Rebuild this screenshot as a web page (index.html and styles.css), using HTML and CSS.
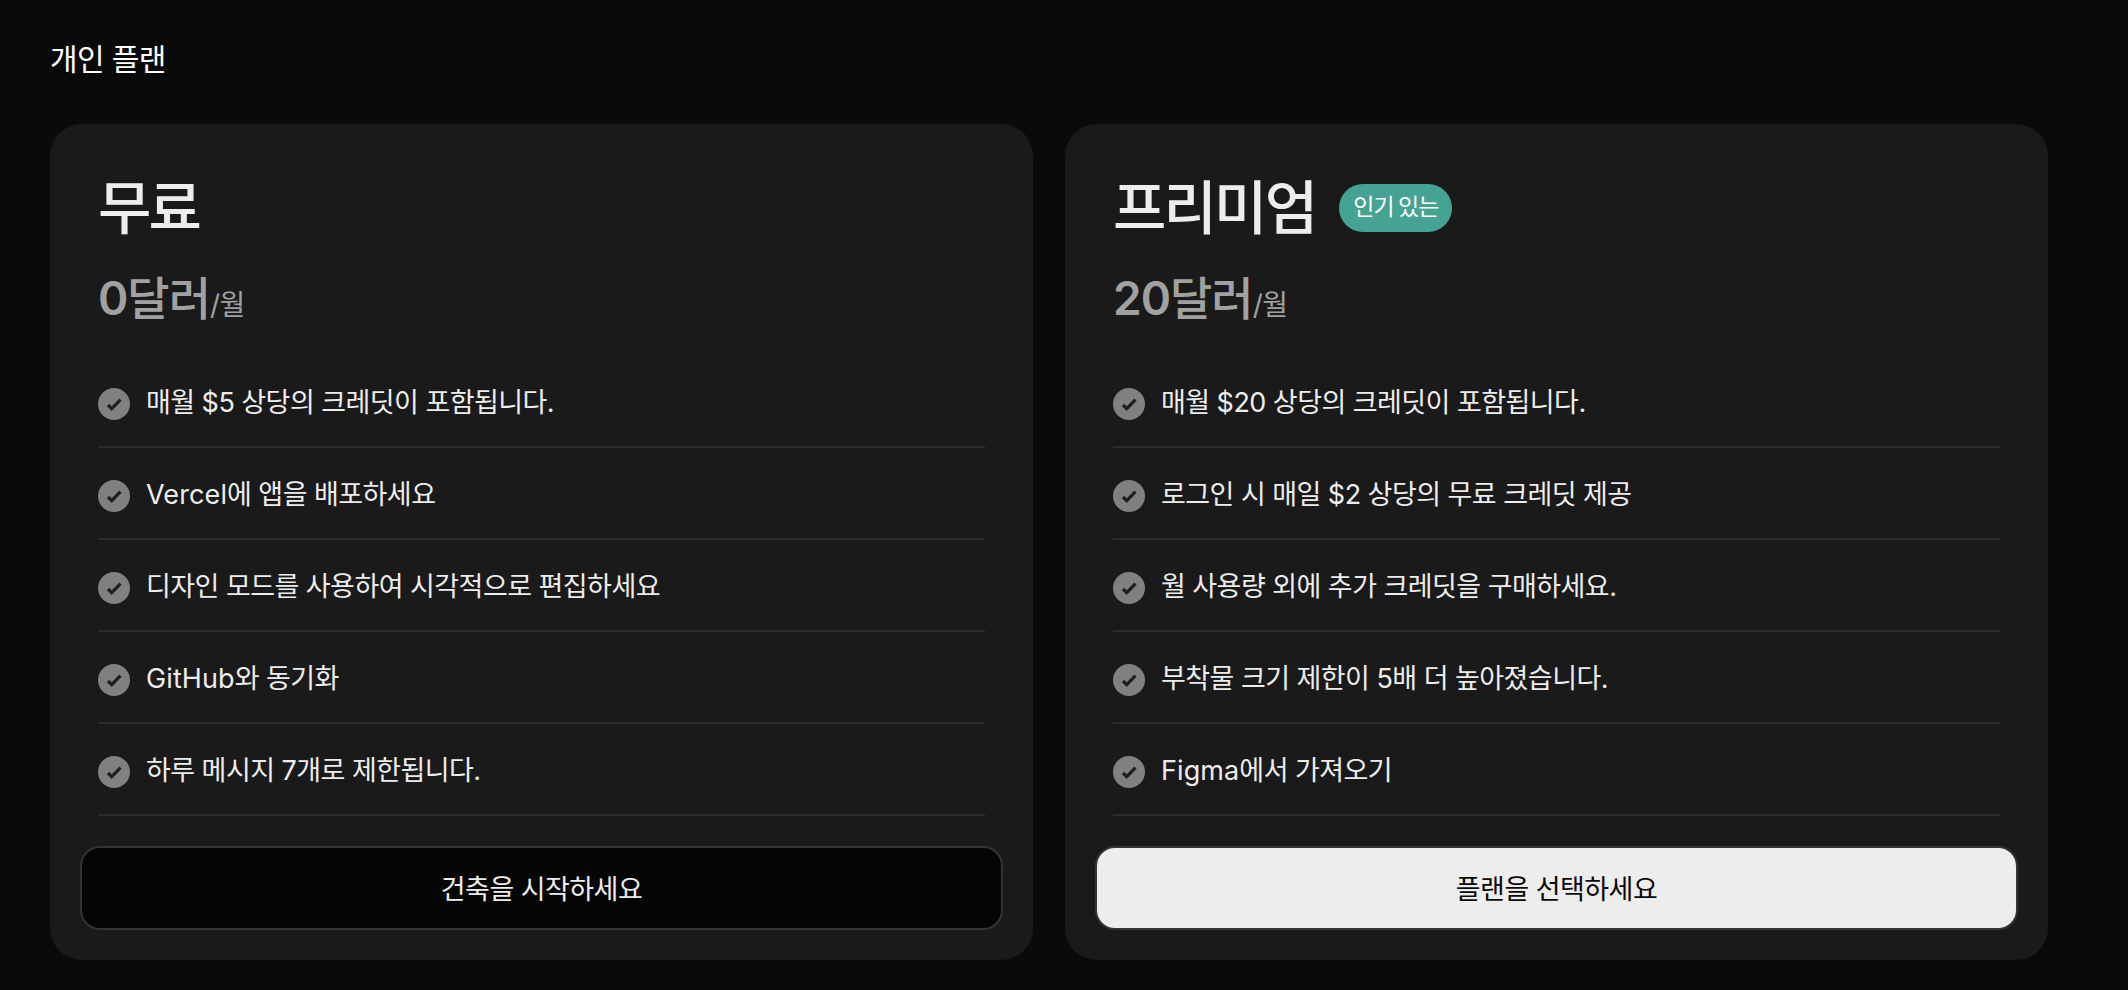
FILE: index.html
```html
<!DOCTYPE html>
<html lang="ko">
<head>
<meta charset="utf-8">
<title>개인 플랜</title>
<link rel="stylesheet" href="styles.css">
</head>
<body>
<main class="page">
  <h2 class="section-title">개인 플랜</h2>
  <div class="plans">
    <section class="card">
      <div class="card-head"><h3 class="plan-name">무료</h3></div>
      <p class="price"><span class="amount"><span class="num">0</span>달러</span><span class="per">/월</span></p>
      <ul class="features">
        <li class="feature"><svg class="check" viewBox="0 0 32 32"><circle cx="16" cy="16" r="16"/><path d="M10 17l3.7 3.7 8.8-9"/></svg><span class="label">매월 $5 상당의 크레딧이 포함됩니다.</span></li>
        <li class="feature"><svg class="check" viewBox="0 0 32 32"><circle cx="16" cy="16" r="16"/><path d="M10 17l3.7 3.7 8.8-9"/></svg><span class="label"><span class="latin">Vercel</span>에 앱을 배포하세요</span></li>
        <li class="feature"><svg class="check" viewBox="0 0 32 32"><circle cx="16" cy="16" r="16"/><path d="M10 17l3.7 3.7 8.8-9"/></svg><span class="label">디자인 모드를 사용하여 시각적으로 편집하세요</span></li>
        <li class="feature"><svg class="check" viewBox="0 0 32 32"><circle cx="16" cy="16" r="16"/><path d="M10 17l3.7 3.7 8.8-9"/></svg><span class="label"><span class="latin">GitHub</span>와 동기화</span></li>
        <li class="feature"><svg class="check" viewBox="0 0 32 32"><circle cx="16" cy="16" r="16"/><path d="M10 17l3.7 3.7 8.8-9"/></svg><span class="label">하루 메시지 7개로 제한됩니다.</span></li>
      </ul>
      <button class="cta cta-dark">건축을 시작하세요</button>
    </section>
    <section class="card">
      <div class="card-head"><h3 class="plan-name">프리미엄</h3><span class="badge">인기 있는</span></div>
      <p class="price"><span class="amount"><span class="num">20</span>달러</span><span class="per">/월</span></p>
      <ul class="features">
        <li class="feature"><svg class="check" viewBox="0 0 32 32"><circle cx="16" cy="16" r="16"/><path d="M10 17l3.7 3.7 8.8-9"/></svg><span class="label">매월 $20 상당의 크레딧이 포함됩니다.</span></li>
        <li class="feature"><svg class="check" viewBox="0 0 32 32"><circle cx="16" cy="16" r="16"/><path d="M10 17l3.7 3.7 8.8-9"/></svg><span class="label">로그인 시 매일 $2 상당의 무료 크레딧 제공</span></li>
        <li class="feature"><svg class="check" viewBox="0 0 32 32"><circle cx="16" cy="16" r="16"/><path d="M10 17l3.7 3.7 8.8-9"/></svg><span class="label">월 사용량 외에 추가 크레딧을 구매하세요.</span></li>
        <li class="feature"><svg class="check" viewBox="0 0 32 32"><circle cx="16" cy="16" r="16"/><path d="M10 17l3.7 3.7 8.8-9"/></svg><span class="label">부착물 크기 제한이 5배 더 높아졌습니다.</span></li>
        <li class="feature"><svg class="check" viewBox="0 0 32 32"><circle cx="16" cy="16" r="16"/><path d="M10 17l3.7 3.7 8.8-9"/></svg><span class="label"><span class="latin">Figma</span>에서 가져오기</span></li>
      </ul>
      <button class="cta cta-light">플랜을 선택하세요</button>
    </section>
  </div>
</main>
</body>
</html>
```
FILE: styles.css
```css
* { box-sizing: border-box; }
html, body { margin: 0; height: 100%; }
body {
  background: #0a0a0a;
  color: #ededed;
  font-family: Inter, "Noto Sans CJK KR", sans-serif;
  overflow: hidden;
}
.page { padding: 40px 80px 30px 50px; }
.section-title {
  margin: 0 0 46px;
  font-size: 30px;
  line-height: 38px;
  font-weight: 400;
  letter-spacing: -0.6px;
  color: #fff;
}
.plans { display: grid; grid-template-columns: 983px 983px; gap: 32px; }
.card {
  height: 836px;
  background: #1a1a1a;
  border-radius: 32px;
  padding: 52px 30px 30px;
  display: flex;
  flex-direction: column;
}
.card-head { display: flex; align-items: center; gap: 24px; height: 64px; padding-left: 18px; }
.plan-name { margin: 0; font-size: 58px; line-height: 64px; font-weight: 500; color: #ededed; letter-spacing: -2.8px; }
.badge {
  background: #45a393;
  color: #fff;
  font-size: 23px;
  line-height: 46px;
  height: 48px;
  padding: 0 14px;
  border-radius: 24px;
  letter-spacing: -1px;
  word-spacing: -1px;
  margin-top: 0;
}
.price { margin: 28px 0 0; padding-left: 18px; display: flex; align-items: baseline; height: 60px; color: #a1a1a1; }
.amount { font-size: 46px; line-height: 60px; font-weight: 500; letter-spacing: -1px; }
.num { font-weight: 600; }
.per { font-size: 28px; font-weight: 400; letter-spacing: -0.5px; }
.features { list-style: none; margin: 28px 18px 0; padding: 0; flex: 1; }
.feature {
  display: flex;
  align-items: center;
  gap: 16px;
  height: 92px;
  border-bottom: 2px solid #2a2a2a;
  font-size: 27px;
  letter-spacing: -0.55px;
}
.label { margin-bottom: 2px; }
.latin { letter-spacing: 0.1px; }
.check { width: 32px; height: 32px; flex: none; margin-top: 6px; }
.check circle { fill: #808080; }
.check path { fill: none; stroke: #1f1f1f; stroke-width: 3.2; }
.cta {
  height: 84px;
  padding-bottom: 3px;
  border-radius: 20px;
  border: 2px solid #333;
  font: inherit;
  font-size: 27px;
  font-weight: 400;
  letter-spacing: -0.55px;
}
.cta-dark { background: #050505; color: #ededed; }
.cta-light { background: #ededed; color: #0a0a0a; }
```
